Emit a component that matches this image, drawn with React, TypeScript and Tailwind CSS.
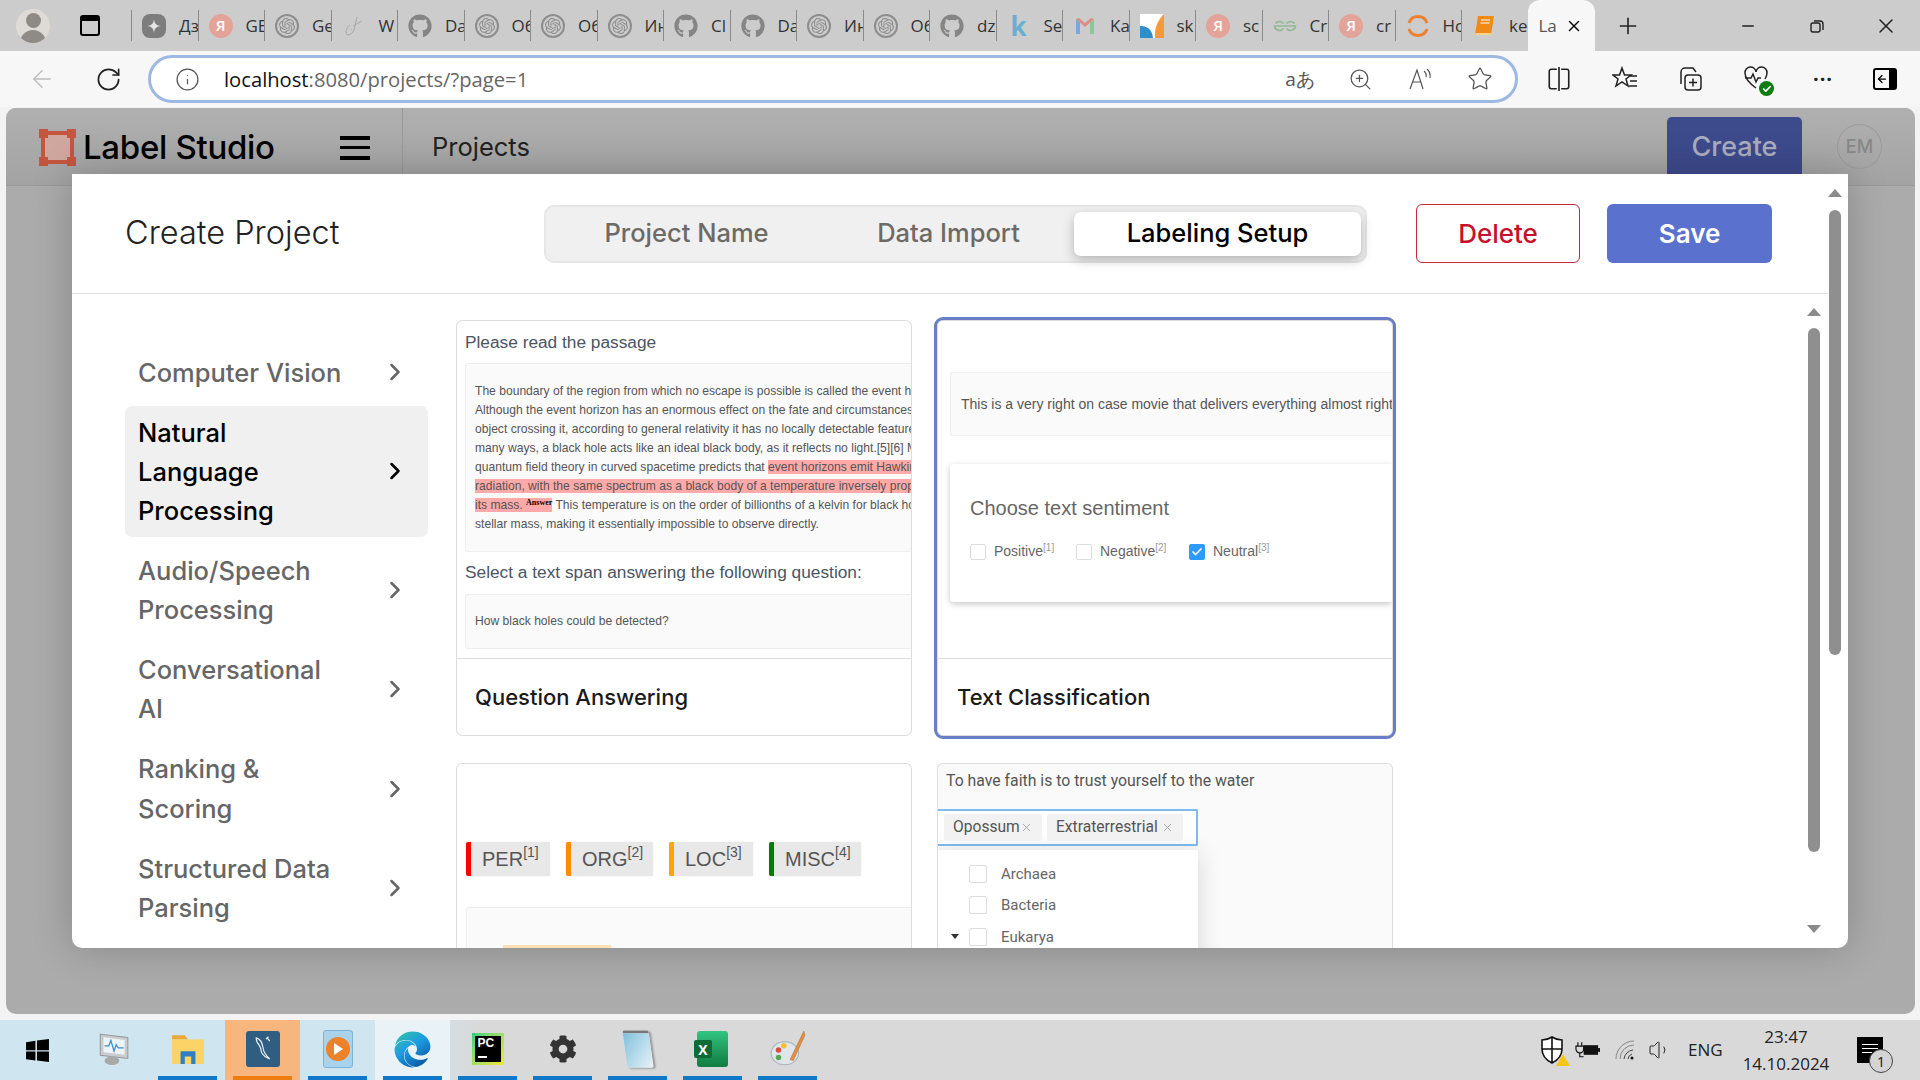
import type { ReactNode } from "react";
import { ArrowLeft, ChevronRight, Info, Plus, RotateCw, Star, X, ZoomIn, Minus, Volume1, Check } from "lucide-react";
import { FaGithub, FaCog, FaEdge } from "react-icons/fa";
import { SiOpenai } from "react-icons/si";

const UI = "font-['Inter',sans-serif]";
const PREVIEW = "font-['Liberation_Sans',sans-serif]";
const WIN = "font-['Open_Sans',sans-serif]";

const YaIcon = () => (
  <div className="flex size-6 items-center justify-center rounded-full bg-[#e3a399] text-[15px] font-semibold text-white">Я</div>
);
const GptIcon = () => (
  <div className="flex size-6 items-center justify-center rounded-full border-2 border-[#8d8d8d]">
    <SiOpenai className="size-4 text-[#8d8d8d]" />
  </div>
);
const GitIcon = () => <FaGithub className="size-6 text-[#858585]" />;
const ZenIcon = () => (
  <div className="flex size-6 items-center justify-center rounded-lg bg-[#7d7d7d]">
    <svg viewBox="0 0 16 16" className="size-4"><path d="M8 1c.4 4.6 2.4 6.6 7 7-4.6.4-6.6 2.4-7 7-.4-4.6-2.4-6.6-7-7 4.6-.4 6.6-2.4 7-7z" fill="#e4e4e4" /></svg>
  </div>
);
const FeatherIcon = () => (
  <svg viewBox="0 0 24 24" className="size-6" fill="none" stroke="#a8a8a8" strokeWidth="1"><path d="M5 21c-2-4 0-8 3-10M15 3l-3 13c-1 3-4 5-7 5M20 7l-9 5M9 15l1 1" /></svg>
);
const KIcon = () => <div className="w-6 text-center text-[26px] font-bold leading-none text-[#69afd0]">k</div>;
const GmailIcon = () => (
  <svg viewBox="0 0 24 24" className="size-6"><path d="M3 20V5l4 3v12z" fill="#7fa6d8" /><path d="M21 20V5l-4 3v12z" fill="#8cc79a" /><path d="M3 5l9 8 9-8-3-1-6 5-6-5z" fill="#e08c82" /></svg>
);
const SkIcon = () => (
  <svg viewBox="0 0 24 24" className="size-6"><path d="M0 0h24v24H0z" fill="#fff" /><path d="M0 12c6 0 12 2 13 12H0z" fill="#2f8fc9" /><path d="M24 0v24h-9C14 14 18 6 24 0z" fill="#f59a3c" /></svg>
);
const GfgIcon = () => (
  <svg viewBox="0 0 24 24" className="size-6" fill="none" stroke="#90b894" strokeWidth="1.6"><path d="M12 12H1.5a5 5 0 0 0 9 2.5M12 12h10.5a5 5 0 0 1-9 2.5M10.5 9.5a5 5 0 0 0-8 0M13.5 9.5a5 5 0 0 1 8 0" /></svg>
);
const RingIcon = () => (
  <svg viewBox="0 0 24 24" className="size-6" fill="none" stroke="#ee8131" strokeWidth="3"><path d="M3 9a9.5 9.5 0 0 1 18 0M3 15a9.5 9.5 0 0 0 18 0" /></svg>
);
const BookIcon = () => (
  <svg viewBox="0 0 24 24" className="size-6"><path d="M6 2h16l-3 19H3z" fill="#ef8a17" /><path d="M3 21h16l1-2H4z" fill="#fbd28b" /><path d="M9 6h9M8.5 9h9" stroke="#fff" strokeWidth="1" /></svg>
);

const tabs: { icon: ReactNode; text: string }[] = [
  { icon: <ZenIcon />, text: "Дз" },
  { icon: <YaIcon />, text: "GE" },
  { icon: <GptIcon />, text: "Ge" },
  { icon: <FeatherIcon />, text: "W" },
  { icon: <GitIcon />, text: "Da" },
  { icon: <GptIcon />, text: "Об" },
  { icon: <GptIcon />, text: "Об" },
  { icon: <GptIcon />, text: "Ин" },
  { icon: <GitIcon />, text: "Cl" },
  { icon: <GitIcon />, text: "Da" },
  { icon: <GptIcon />, text: "Ин" },
  { icon: <GptIcon />, text: "Об" },
  { icon: <GitIcon />, text: "dz" },
  { icon: <KIcon />, text: "Se" },
  { icon: <GmailIcon />, text: "Ka" },
  { icon: <SkIcon />, text: "sk" },
  { icon: <YaIcon />, text: "sc" },
  { icon: <GfgIcon />, text: "Cr" },
  { icon: <YaIcon />, text: "cr" },
  { icon: <RingIcon />, text: "Hc" },
  { icon: <BookIcon />, text: "ke" },
];

const TabStrip = () => (
  <div className={`flex h-[51px] shrink-0 items-stretch bg-[#cccccc] ${WIN}`}>
    <div className="flex w-[66px] items-center justify-center">
      <div className="flex size-[34px] flex-col items-center justify-end overflow-hidden rounded-full bg-[#dedbd6]">
        <div className="size-[15px] rounded-full bg-[#8e8a86]" />
        <div className="mt-[2px] h-[13px] w-[26px] rounded-t-full bg-[#8e8a86]" />
      </div>
    </div>
    <div className="mr-[17px] flex w-[48px] items-center justify-center">
      <div className="h-[21px] w-[20px] rounded-[3px] border-2 border-t-[6px] border-black" />
    </div>
    <div className="flex">
      {tabs.map((t, i) => (
        <div key={i} className="my-[10px] flex w-[66.5px] items-center gap-[13px] overflow-hidden border-l border-[#8a8a8a] pl-[10px] text-[17px] text-[#333]">
          <div className="shrink-0">{t.icon}</div>
          <span className="whitespace-nowrap">{t.text}</span>
        </div>
      ))}
    </div>
    <div className="flex w-[67px] items-center justify-between rounded-t-[12px] bg-[#f7f7f7] pl-[11px] pr-[12px] text-[17px] text-[#555]">
      <span>La</span>
      <X className="size-[18px] text-black" strokeWidth={2} />
    </div>
    <div className="flex w-[66px] items-center justify-center">
      <Plus className="size-[26px] text-[#222]" strokeWidth={1.5} />
    </div>
    <div className="ml-auto flex">
      <div className="flex w-[69px] items-center justify-center"><Minus className="size-[18px] text-[#222]" strokeWidth={2} /></div>
      <div className="flex w-[69px] items-center justify-center">
        <svg viewBox="0 0 16 16" className="size-4" fill="none" stroke="#222" strokeWidth="1.4"><rect x="2" y="5" width="9" height="9" rx="2" /><path d="M5 3h6a3 3 0 0 1 3 3v6" /></svg>
      </div>
      <div className="flex w-[69px] items-center justify-center"><X className="size-[24px] text-[#222]" strokeWidth={1.5} /></div>
    </div>
  </div>
);

const Slot = ({ w, children }: { w: string; children: ReactNode }) => (
  <div className={`flex shrink-0 items-center justify-center ${w}`}>{children}</div>
);

const Toolbar = () => (
  <div className={`flex h-[56px] shrink-0 items-center bg-[#f7f7f7] ${WIN}`}>
    <Slot w="w-[84px]"><ArrowLeft className="size-[28px] text-[#bcbcbc]" strokeWidth={1.2} /></Slot>
    <Slot w="w-[48px]"><RotateCw className="size-[27px] text-[#222]" strokeWidth={1.5} /></Slot>
    <div className="ml-4 flex h-[48px] w-[1370px] items-center rounded-[24px] border-[3px] border-[#9db9e3] bg-white pr-[5px]">
      <Slot w="w-[73px]"><Info className="size-[25px] text-[#555]" strokeWidth={1.2} /></Slot>
      <div className="flex-1 text-[20.2px] text-[#666]"><span className="text-[#111]">localhost</span>:8080/projects/?page=1</div>
      <Slot w="w-[60px]"><span className="text-[19px] text-[#555]">aあ</span></Slot>
      <Slot w="w-[60px]"><ZoomIn className="size-[25px] text-[#555]" strokeWidth={1.2} /></Slot>
      <Slot w="w-[60px]">
        <svg viewBox="0 0 26 26" className="size-[26px]" fill="none" stroke="#555" strokeWidth="1.2"><path d="M3 23l7-19 6 19M5.5 16h9M17 5a6 6 0 0 1 2 6M20 3a10 10 0 0 1 3 9" /></svg>
      </Slot>
      <Slot w="w-[60px]"><Star className="size-[26px] text-[#555]" strokeWidth={1.2} /></Slot>
    </div>
    <div className="ml-2 flex">
      <Slot w="w-[66px]">
        <svg viewBox="0 0 24 24" className="size-[26px]" fill="none" stroke="#222" strokeWidth="1.5"><path d="M10 3H5a2 2 0 0 0-2 2v14a2 2 0 0 0 2 2h5M14 3h5a2 2 0 0 1 2 2v14a2 2 0 0 1-2 2h-5M12 1v22" /></svg>
      </Slot>
      <Slot w="w-[66px]">
        <svg viewBox="0 0 26 26" className="size-[26px]" fill="none" stroke="#222" strokeWidth="1.5"><path d="M10 2l2.5 7H19l-5 4 2 7-6-4-6 4 2-7-5-4h6.5zM18 10h7M18 15h7M17 20h8" /></svg>
      </Slot>
      <Slot w="w-[66px]">
        <svg viewBox="0 0 26 26" className="size-[26px]" fill="none" stroke="#222" strokeWidth="1.5"><rect x="7" y="9" width="16" height="15" rx="3" /><path d="M15 12.5v8M11 16.5h8M3 18V6a4 4 0 0 1 4-4h8l3 4" /></svg>
      </Slot>
      <Slot w="w-[66px]">
        <div className="relative size-[28px]">
          <svg viewBox="0 0 26 26" className="size-[26px]" fill="none" stroke="#222" strokeWidth="1.5"><path d="M13 23C6 18 2 13 2 8a5.5 5.5 0 0 1 11-1 5.5 5.5 0 0 1 11 1c0 2-.6 3.5-2 6M2 13h6l2-4 3 8 2-4h3" /></svg>
          <div className="absolute bottom-[-3px] right-[-3px] flex size-[15px] items-center justify-center rounded-full bg-[#107c10]"><Check className="size-[10px] text-white" strokeWidth={4} /></div>
        </div>
      </Slot>
      <Slot w="w-[66px]"><span className="text-[20px] font-bold leading-none tracking-[1px] text-[#222]">···</span></Slot>
      <Slot w="w-[58px]">
        <div className="flex h-[22px] w-[24px] items-center justify-center rounded-[3px] border-2 border-r-[8px] border-black">
          <ArrowLeft className="size-[12px] text-black" strokeWidth={2.5} />
        </div>
      </Slot>
    </div>
  </div>
);

const Logo = () => (
  <svg viewBox="0 0 37 37" className="h-[37px] w-[37px]">
    <rect x="4" y="4" width="29" height="29" fill="#cfa79f" />
    <path d="M4 4h29v29H4z" fill="none" stroke="#c4563e" strokeWidth="4" />
    <path d="M0 0h9v9H0zM28 0h9v9h-9zM0 28h9v9H0zM28 28h9v9h-9z" fill="#c4563e" />
  </svg>
);

const AppHeader = () => (
  <div className={`flex h-[78px] shrink-0 items-stretch border-b border-[#999] bg-gradient-to-b from-[#b0b0b0] to-[#a3a3a3] ${UI}`}>
    <div className="flex w-[397px] items-center border-r border-[#999] pl-[33px] pt-[2px]">
      <Logo />
      <span className="ml-[7px] text-[33px] font-medium tracking-[-0.3px] text-black">Label Studio</span>
      <div className="ml-[65px] flex h-[24px] w-[30px] flex-col justify-between">
        <div className="h-[4px] bg-black" />
        <div className="h-[3px] bg-black" />
        <div className="h-[4px] bg-black" />
      </div>
    </div>
    <div className="flex items-center pl-[29px] pt-[2px] text-[25.5px] text-[#222]">Projects</div>
    <div className="ml-auto flex items-start pt-[9px]">
      <div className="flex h-[62px] w-[135px] items-center justify-center rounded-[5px] bg-[#3d4a8c] pb-[2px] text-[27px] font-medium text-[#a9adbe]">Create</div>
      <div className="ml-[35px] mr-[33px] mt-[7px] flex size-[45px] items-center justify-center rounded-full border border-[#999] text-[18px] font-medium text-[#888]">EM</div>
    </div>
  </div>
);

const ModalHeader = () => (
  <div className={`flex h-[120px] shrink-0 items-center border-b border-[#e2e2e2] pl-[53px] ${UI}`}>
    <div className="w-[419px] text-[32.5px] font-[350] text-[#222]">Create Project</div>
    <div className="flex h-[58px] w-[823px] items-center rounded-[10px] border-2 border-[#e6e6e6] bg-[#f0f0f0] pr-[4px] text-[25.5px] font-medium text-[#6d6a66]">
      <div className="w-[281px] text-center">Project Name</div>
      <div className="mr-[4px] w-[243px] text-center">Data Import</div>
      <div className="flex h-[44px] flex-1 items-center justify-center rounded-[7px] bg-white text-black shadow-[0_4px_12px_rgba(0,0,0,0.25)]">Labeling Setup</div>
    </div>
    <button className="ml-[49px] h-[59px] w-[164px] rounded-[6px] border border-[#c9283e] text-[26px] font-medium text-[#c7112b]">Delete</button>
    <button className="ml-[27px] h-[59px] w-[165px] rounded-[6px] bg-[#5a71cd] text-[26px] font-semibold text-white">Save</button>
  </div>
);

const menu = [
  { lines: ["Computer Vision"] },
  { lines: ["Natural", "Language", "Processing"], active: true },
  { lines: ["Audio/Speech", "Processing"] },
  { lines: ["Conversational", "AI"] },
  { lines: ["Ranking &", "Scoring"] },
  { lines: ["Structured Data", "Parsing"] },
];

const Sidebar = () => (
  <div className={`flex w-[303px] shrink-0 flex-col gap-[6.8px] pt-[51.5px] ${UI}`}>
    {menu.map((m) => (
      <div key={m.lines[0]} className={`flex items-center justify-between rounded-[7px] py-[7px] pl-[13px] pr-[19px] text-[25.5px] font-medium leading-[39.2px] ${m.active ? "bg-[#f0f0f0] text-black" : "text-[#666]"}`}>
        <div>
          {m.lines.map((l) => (
            <div key={l} className="whitespace-nowrap">{l}</div>
          ))}
        </div>
        <ChevronRight className="size-[28px]" strokeWidth={2.2} />
      </div>
    ))}
  </div>
);

const CardTitle = ({ children, pl }: { children: ReactNode; pl: string }) => (
  <div className={`flex h-[77px] shrink-0 items-center border-t border-[#ddd] text-[22px] font-medium text-[#1a1a1a] ${pl} ${UI}`}>{children}</div>
);

const QuestionCard = () => (
  <div className={`flex h-[416px] flex-col overflow-hidden rounded-[6px] border border-[#ddd] bg-white ${PREVIEW}`}>
    <div className="flex h-[337px] shrink-0 flex-col pl-[8px] text-[#4b5563]">
      <div className="pt-[10px] text-[17.3px] leading-[22px]">Please read the passage</div>
      <div className="mt-[10px] h-[189px] overflow-hidden whitespace-nowrap rounded-l-[3px] border border-r-0 border-[#eee] bg-[#fafafa] px-[9px] pt-[18px] text-[12.1px] leading-[19px] text-[#555]">
        <div>The boundary of the region from which no escape is possible is called the event horizon.</div>
        <div>Although the event horizon has an enormous effect on the fate and circumstances of an</div>
        <div>object crossing it, according to general relativity it has no locally detectable features. In</div>
        <div>many ways, a black hole acts like an ideal black body, as it reflects no light.[5][6] Moreover,</div>
        <div>quantum field theory in curved spacetime predicts that <span className="bg-[#ffa9a9]">event horizons emit Hawking</span></div>
        <div><span className="bg-[#ffa9a9]">radiation, with the same spectrum as a black body of a temperature inversely proportional to</span></div>
        <div>
          <span className="bg-[#ffa9a9]">its mass. <sup className="font-['Liberation_Serif',serif] text-[8px] font-bold text-black">Answer</sup></span> This temperature is on the order of billionths of a kelvin for black holes of
        </div>
        <div>stellar mass, making it essentially impossible to observe directly.</div>
      </div>
      <div className="mt-[9px] text-[17.3px] leading-[22px]">Select a text span answering the following question:</div>
      <div className="mt-[11px] flex h-[55px] items-center rounded-l-[3px] border border-r-0 border-[#eee] bg-[#fafafa] pl-[9px] text-[12.1px] text-[#555]">How black holes could be detected?</div>
    </div>
    <CardTitle pl="pl-[18px]">Question Answering</CardTitle>
  </div>
);

const Sentiment = ({ label, n, checked, w }: { label: string; n: number; checked?: boolean; w: string }) => (
  <div className={`flex items-center gap-[8px] text-[14px] text-[#666] ${w}`}>
    {checked ? (
      <div className="flex size-[16px] items-center justify-center rounded-[2px] bg-[#2c9bff]"><Check className="size-[12px] text-white" strokeWidth={3.5} /></div>
    ) : (
      <div className="size-[16px] rounded-[2px] border border-[#ddd] bg-white" />
    )}
    <span>{label}<sup className="text-[10px] text-[#999]">[{n}]</sup></span>
  </div>
);

const ClassificationCard = () => (
  <div className={`flex h-[416px] flex-col overflow-hidden rounded-[6px] border border-[#ddd] bg-white outline-[3px] outline-[#6a7ec8] ${PREVIEW}`}>
    <div className="flex h-[337px] shrink-0 flex-col pl-[12px]">
      <div className="mt-[51px] flex h-[64px] items-center overflow-hidden whitespace-nowrap rounded-l-[3px] border border-r-0 border-[#eee] bg-[#fafafa] pl-[10px] text-[14px] text-[#555]">
        This is a very right on case movie that delivers everything almost right
      </div>
      <div className="mt-[28px] h-[138px] rounded-l-[4px] bg-white pl-[20px] pt-[33px] shadow-[0_2px_6px_rgba(0,0,0,0.22)]">
        <div className="text-[20px] leading-[22px] text-[#666]">Choose text sentiment</div>
        <div className="mt-[22px] flex">
          <Sentiment label="Positive" n={1} w="w-[106px]" />
          <Sentiment label="Negative" n={2} w="w-[113px]" />
          <Sentiment label="Neutral" n={3} checked w="w-[100px]" />
        </div>
      </div>
    </div>
    <CardTitle pl="pl-[19px]">Text Classification</CardTitle>
  </div>
);

const NerLabel = ({ name, n, bar, w }: { name: string; n: number; bar: string; w: string }) => (
  <div className={`flex h-[34px] items-center rounded-[2px] border-l-[5px] bg-[#e8e8e8] pl-[11px] text-[20px] text-[#555] shadow-[0_0_1px_rgba(0,0,0,0.2)] ${bar} ${w}`}>
    {name}<sup className="text-[14px]">[{n}]</sup>
  </div>
);

const NerCard = () => (
  <div className={`h-[300px] overflow-hidden rounded-t-[6px] border border-b-0 border-[#ddd] bg-white pl-[9px] pt-[78px] ${PREVIEW}`}>
    <div className="flex gap-[16px]">
      <NerLabel name="PER" n={1} bar="border-[#f00]" w="w-[84px]" />
      <NerLabel name="ORG" n={2} bar="border-[#ff8c00]" w="w-[87px]" />
      <NerLabel name="LOC" n={3} bar="border-[#ffa500]" w="w-[84px]" />
      <NerLabel name="MISC" n={4} bar="border-[#008000]" w="w-[92px]" />
    </div>
    <div className="mt-[31px] h-[100px] rounded-l-[3px] border border-r-0 border-[#eee] bg-[#fafafa] pl-[36px] pt-[37px]">
      <div className="h-[20px] w-[108px] bg-[#ffdfb8]" />
    </div>
  </div>
);

const TreeRow = ({ label, open }: { label: string; open?: boolean }) => (
  <div className="flex h-[31.5px] items-center text-[15px] text-[#666]">
    <div className="flex w-[31px] justify-center pl-[2px]">
      {open && <div className="size-0 border-x-[4px] border-t-[5px] border-x-transparent border-t-[#333]" />}
    </div>
    <div className="size-[18px] rounded-[2px] border border-[#ddd] bg-white" />
    <span className="ml-[14px]">{label}</span>
  </div>
);

const Tag = ({ label, w }: { label: string; w: string }) => (
  <div className={`flex h-[27px] items-center justify-between rounded-[2px] bg-[#f2f2f2] px-[9px] text-[15.6px] text-[#555] ${w}`}>
    {label}
    <X className="size-[13px] text-[#999]" strokeWidth={1.5} />
  </div>
);

const TaxonomyCard = () => (
  <div className="h-[300px] overflow-hidden rounded-t-[6px] border border-b-0 border-[#ddd] bg-[#fafafa] font-['Roboto',sans-serif]">
    <div className="pl-[8px] pt-[7px] text-[15.8px] leading-[20px] text-[#555]">To have faith is to trust yourself to the water</div>
    <div className="mt-[18px] flex h-[37px] w-[260px] items-center gap-[5px] rounded-r-[2px] border-2 border-l-0 border-[#7dbcf0] bg-white pl-[6px]">
      <Tag label="Opossum" w="w-[98px]" />
      <Tag label="Extraterrestrial" w="w-[136px]" />
    </div>
    <div className="mt-[4px] h-[120px] w-[260px] bg-white pt-[8px] shadow-[0_4px_24px_rgba(0,0,0,0.15)]">
      <TreeRow label="Archaea" />
      <TreeRow label="Bacteria" />
      <TreeRow label="Eukarya" open />
    </div>
  </div>
);

const ScrollBar = ({ h, mt }: { h: string; mt: string }) => (
  <div className={`w-[12px] rounded-full bg-[#8f8f8f] ${h} ${mt}`} />
);

const Arrow = ({ down }: { down?: boolean }) =>
  down ? (
    <div className="size-0 border-x-[7px] border-t-[8px] border-x-transparent border-t-[#8a8a8a]" />
  ) : (
    <div className="size-0 border-x-[7px] border-b-[8px] border-x-transparent border-b-[#8a8a8a]" />
  );

const CreateModal = () => (
  <div className="absolute left-[72px] top-[174px] flex h-[774px] w-[1776px] overflow-hidden rounded-b-[10px] bg-white shadow-[0_0_40px_rgba(0,0,0,0.22)]">
    <div className="flex min-w-0 flex-1 flex-col">
      <ModalHeader />
      <div className="flex min-h-0 flex-1 pl-[53px]">
        <Sidebar />
        <div className="ml-[28px] grid h-fit grid-cols-[456px_456px] gap-x-[25px] gap-y-[27px] pt-[26px]">
          <QuestionCard />
          <ClassificationCard />
          <NerCard />
          <TaxonomyCard />
        </div>
        <div className="ml-auto mr-[8px] flex w-[13px] flex-col items-center pt-[14px]">
          <Arrow />
          <ScrollBar h="h-[524px]" mt="mt-[12px]" />
          <div className="mt-[73px]"><Arrow down /></div>
        </div>
      </div>
    </div>
    <div className="flex w-[20px] shrink-0 flex-col items-center pr-[6px] pt-[15px]">
      <Arrow />
      <ScrollBar h="h-[445px]" mt="mt-[13px]" />
    </div>
  </div>
);

const TaskSlot = ({ bar, barClass, bg, children }: { bar?: boolean; barClass?: string; bg?: string; children: ReactNode }) => (
  <div className={`relative flex h-full w-[75px] items-center justify-center pb-[2px] ${bg ?? ""}`}>
    {children}
    {bar && <div className={`absolute bottom-0 left-[8px] right-[8px] h-[4px] ${barClass ?? "bg-[#0f78c8]"}`} />}
  </div>
);

const TaskBar = () => (
  <div className={`flex h-[60px] shrink-0 items-center bg-gradient-to-r from-[#cfe5ef] from-20% to-[#d9d9d9] to-25% ${WIN}`}>
    <div className="flex h-full w-[75px] items-center justify-center">
      <svg viewBox="0 0 24 24" className="size-[25px]"><path d="M1 4l9-1.300v9H1zM11.500 2.500L23 1v10.700H11.500zM1 13h9v8.700L1 20.500zM11.500 13H23v10l-11.500-1.500z" fill="#000" /></svg>
    </div>
    <TaskSlot>
      <svg viewBox="0 0 34 34" className="size-[36px]">
        <path d="M5 3l26 3v20L5 23z" fill="#c8ccd0" stroke="#999" />
        <path d="M8 6l20 2.500v14L8 20z" fill="#eef3f6" />
        <path d="M9 14h4l2-5 3 10 2-6 2 3h5" fill="none" stroke="#3b8fd0" strokeWidth="1.2" />
        <ellipse cx="16" cy="28" rx="7" ry="4" fill="#a9a9a9" />
      </svg>
    </TaskSlot>
    <TaskSlot bar>
      <svg viewBox="0 0 32 32" className="size-[34px]">
        <path d="M1 3h12l3 4H1z" fill="#e8a83a" />
        <path d="M1 7h30v23H1z" fill="#fcd367" />
        <path d="M9 30V18h14v12h-4v-7h-6v7z" fill="#2f7fc4" />
      </svg>
    </TaskSlot>
    <TaskSlot bar barClass="bg-[#ee7d11]" bg="bg-[#f6b67e]">
      <div className="flex h-[36px] w-[34px] items-center justify-center rounded-[3px] bg-[#2f5e82]">
        <svg viewBox="0 0 32 52" className="h-[32px] w-[24px]" fill="none" stroke="#e5eef4" strokeWidth="2"><path d="M5 8c8 2 10 9 11 16s4 12 11 18c-6-2-10-5-13-10-2-5-1-8-4-12-3-3-5-6-5-12zM22 7l5 6M25 6l-4 4" /></svg>
      </div>
    </TaskSlot>
    <TaskSlot bar>
      <div className="relative flex h-[38px] w-[30px] items-center justify-center rounded-[3px] border border-[#7cb3d8] bg-[#a9d2ec]">
        <div className="flex size-[24px] items-center justify-center rounded-full bg-[#ee8228]">
          <div className="ml-[2px] size-0 border-y-[6px] border-l-[9px] border-y-transparent border-l-white" />
        </div>
      </div>
    </TaskSlot>
    <TaskSlot bar bg="bg-[#e9f3f7]">
      <svg width="0" height="0" className="absolute">
        <defs>
          <linearGradient id="edgeFill" x1="0" y1="0" x2="0.7" y2="1">
            <stop offset="0" stopColor="#36c4a0" />
            <stop offset="0.5" stopColor="#1b9de2" />
            <stop offset="1" stopColor="#0c59a4" />
          </linearGradient>
        </defs>
      </svg>
      <FaEdge className="size-[37px] fill-[url(#edgeFill)]" />
    </TaskSlot>
    <TaskSlot bar>
      <div className="flex size-[32px] items-center justify-center bg-gradient-to-br from-[#1fd17e] to-[#f0e82a] p-[3px]">
        <div className="flex size-full flex-col bg-black px-[3px] pt-[1px] font-['Liberation_Sans',sans-serif] text-[12px] font-bold leading-[13px] text-white">
          PC
          <div className="mt-[6px] h-[2px] w-[9px] bg-white" />
        </div>
      </div>
    </TaskSlot>
    <TaskSlot bar><FaCog className="size-[28px] text-[#333]" /></TaskSlot>
    <TaskSlot bar>
      <div className="h-[38px] w-[26px] skew-y-[8deg] -rotate-[8deg] rounded-[2px] border-t-[3px] border-[#777] bg-gradient-to-br from-[#7fc0dc] to-[#e8f3f7] shadow-[2px_1px_2px_rgba(0,0,0,0.3)]" />
    </TaskSlot>
    <TaskSlot bar>
      <div className="relative h-[36px] w-[31px] rounded-[3px] bg-gradient-to-b from-[#33c481] to-[#107c41]">
        <div className="absolute left-[-3px] top-[9px] flex size-[18px] items-center justify-center rounded-[2px] bg-[#0e6b38] text-[14px] font-bold text-white">X</div>
      </div>
    </TaskSlot>
    <TaskSlot bar>
      <svg viewBox="0 0 36 36" className="size-[38px]">
        <ellipse cx="15" cy="22" rx="13" ry="11" fill="#dfe6ea" stroke="#a9b5bc" />
        <circle cx="9" cy="19" r="2.600" fill="#dd4b3e" />
        <circle cx="14" cy="15" r="2.600" fill="#f0c030" />
        <circle cx="9" cy="26" r="2.600" fill="#58a852" />
        <path d="M33 1l1 4-11 24-3-1z" fill="#e09045" stroke="#b86a20" strokeWidth="0.5" />
      </svg>
    </TaskSlot>
    <div className="ml-auto flex h-full items-center text-[#222]">
      <div className="relative mr-[10px] flex h-[30px] w-[26px] items-center justify-center">
        <svg viewBox="0 0 24 28" className="h-[28px] w-[24px]" fill="#fff" stroke="#111" strokeWidth="1.6"><path d="M12 1c3 2 6 3 10 3v9c0 6-4 11-10 14C6 24 2 19 2 13V4c4 0 7-1 10-3zM12 1v26M2 13h20" /></svg>
        <div className="absolute bottom-[-1px] right-[-5px] size-0 border-x-[7px] border-b-[12px] border-x-transparent border-b-[#f5c518]" />
      </div>
      <svg viewBox="0 0 26 18" className="mr-[15px] h-[18px] w-[25px]"><path d="M3 1v4M7 1v4M1 5h8v3a4 4 0 0 1-8 0zM5 12v4h4" fill="none" stroke="#111" strokeWidth="1.200" /><rect x="9" y="4" width="15" height="10" fill="#111" /><rect x="24" y="7" width="2" height="4" fill="#111" /></svg>
      <svg viewBox="0 0 20 20" className="mr-[13px] size-[20px]" fill="none" stroke="#888" strokeWidth="1"><path d="M1 19A18 18 0 0 1 19 1M5 19A14 14 0 0 1 19 5" /><path d="M9 19a10 10 0 0 1 9-9" stroke="#444" /><path d="M13 19a6 6 0 0 1 4-5" stroke="#444" /><circle cx="17" cy="18" r="1.500" fill="#111" stroke="none" /></svg>
      <Volume1 className="mr-[16px] size-[24px] text-[#222]" strokeWidth={1} />
      <span className="w-[45px] text-[17px]">ENG</span>
      <div className="w-[106px] text-center text-[17px] leading-[27px]">
        <div>23:47</div>
        <div>14.10.2024</div>
      </div>
      <div className="relative ml-[18px] mr-[37px] size-[26px] bg-black">
        <div className="mx-[5px] mt-[7px] h-[1px] bg-white" />
        <div className="mx-[5px] mt-[3px] h-[1px] bg-white" />
        <div className="mx-[5px] mt-[3px] h-[1px] w-[10px] bg-white" />
        <div className="absolute left-[12px] top-[12px] flex size-[24px] items-center justify-center rounded-full border border-[#444] bg-[#d4d4d4] text-[14px] text-[#111]">1</div>
      </div>
    </div>
  </div>
);

const App = () => (
  <div className="relative flex h-[1080px] w-[1920px] flex-col overflow-hidden bg-[#f3f3f3]">
    <TabStrip />
    <Toolbar />
    <div className="mb-[6px] ml-[6px] mr-[5px] mt-[1px] flex min-h-0 flex-1 flex-col overflow-hidden rounded-[10px] bg-[#ababab]">
      <AppHeader />
    </div>
    <TaskBar />
    <CreateModal />
  </div>
);

export default App;
